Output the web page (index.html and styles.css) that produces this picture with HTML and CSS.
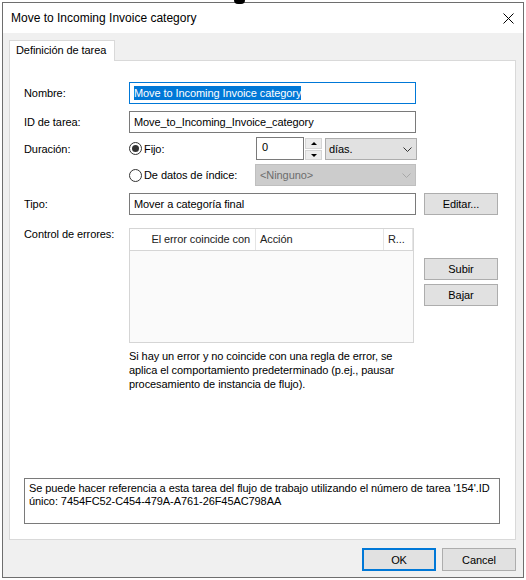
FILE: index.html
```html
<!DOCTYPE html>
<html lang="es">
<head>
    <meta charset="UTF-8">
    <title>Move to Incoming Invoice category</title>
    <link rel="stylesheet" href="styles.css">
</head>
<body>

    <!-- pointer blob peeking over the top edge -->
    <div class="cursor"></div>

    <div class="window">
        <div class="titlebar">
            <span class="title">Move to Incoming Invoice category</span>
            <svg class="close" width="11" height="11" viewBox="0 0 11 11">
                <path d="M0.5 0.5L10.5 10.5M10.5 0.5L0.5 10.5" stroke="#000" stroke-width="1" fill="none"/>
            </svg>
        </div>

        <div class="dialog-body">
            <div class="tab">Definición de tarea</div>

            <div class="panel">
                <div class="row row-name">
                    <span class="lbl">Nombre:</span>
                    <div class="textbox focused"><span class="selected">Move to Incoming Invoice category</span></div>
                </div>

                <div class="row row-id">
                    <span class="lbl">ID de tarea:</span>
                    <div class="textbox">Move_to_Incoming_Invoice_category</div>
                </div>

                <div class="row row-duration">
                    <span class="lbl">Duración:</span>
                    <div class="radio"><span class="dot checked"></span>Fijo:</div>
                    <div class="spin">
                        <div class="spin-input">0</div>
                        <div class="spin-btns">
                            <div class="spin-btn"><span class="tri-up"></span></div>
                            <div class="spin-btn"><span class="tri-down"></span></div>
                        </div>
                    </div>
                    <div class="combo combo-days">
                        <span>días.</span>
                        <svg width="9" height="5" viewBox="0 0 9 5"><polyline points="0.5,0.5 4.5,4.5 8.5,0.5" fill="none" stroke="#333" stroke-width="1"/></svg>
                    </div>
                </div>

                <div class="row row-index">
                    <span class="lbl"></span>
                    <div class="radio radio-index"><span class="dot"></span>De datos de índice:</div>
                    <div class="combo combo-disabled">
                        <span>&lt;Ninguno&gt;</span>
                        <svg width="9" height="5" viewBox="0 0 9 5"><polyline points="0.5,0.5 4.5,4.5 8.5,0.5" fill="none" stroke="#a8a8a8" stroke-width="1"/></svg>
                    </div>
                </div>

                <div class="row row-type">
                    <span class="lbl">Tipo:</span>
                    <div class="textbox">Mover a categoría final</div>
                    <button class="btn btn-side">Editar...</button>
                </div>

                <div class="row row-errors">
                    <span class="lbl">Control de errores:</span>
                    <div class="list">
                        <div class="list-head">
                            <div class="col col-match">El error coincide con</div>
                            <div class="col col-action">Acción</div>
                            <div class="col col-r">R...</div>
                        </div>
                        <div class="list-body"></div>
                    </div>
                    <div class="side-btns">
                        <button class="btn btn-side">Subir</button>
                        <button class="btn btn-side">Bajar</button>
                    </div>
                </div>

                <p class="note">Si hay un error y no coincide con una regla de error, se<br>aplica el comportamiento predeterminado (p.ej., pausar<br>procesamiento de instancia de flujo).</p>

                <div class="info">Se puede hacer referencia a esta tarea del flujo de trabajo utilizando el número de tarea '154'.ID<br>único: 7454FC52-C454-479A-A761-26F45AC798AA</div>
            </div>

            <div class="footer">
                <button class="btn btn-ok">OK</button>
                <button class="btn btn-cancel">Cancel</button>
            </div>
        </div>
    </div>

</body>
</html>
```

FILE: styles.css
```css
body {
    margin: 0;
    background: #fff;
    font-family: "Liberation Sans", Arial, sans-serif;
    font-size: 11px;
    letter-spacing: -0.08px;
    color: #000;
}

.cursor {
    position: absolute;
    left: 234px;
    top: 0;
    width: 11px;
    height: 4px;
    background: #000;
    border-radius: 0 0 5px 5px;
    z-index: 5;
}

.window {
    margin: 2px 0 0 2px;
    width: 522px;
    height: 576px;
    box-sizing: border-box;
    border: 1px solid #6e6e6e;
    background: #f0f0f0;
    display: flex;
    flex-direction: column;
}

.titlebar {
    height: 30px;
    flex-shrink: 0;
    background: #fff;
    display: flex;
    align-items: center;
    padding: 0 9px 0 8px;
}

.title {
    flex: 1;
    font-size: 12px;
    letter-spacing: 0;
}

.dialog-body {
    flex: 1;
    padding: 7px 7px 6px 6px;
    display: flex;
    flex-direction: column;
}

.tab {
    align-self: flex-start;
    width: 106px;
    height: 21px;
    box-sizing: border-box;
    border: 1px solid #d9d9d9;
    border-bottom: none;
    background: #fff;
    padding-left: 6px;
    line-height: 19px;
    margin-bottom: -1px;
    position: relative;
    z-index: 1;
}

.panel {
    height: 480px;
    box-sizing: border-box;
    border: 1px solid #d9d9d9;
    background: #fff;
    padding: 21px 0 15px 14px;
    display: flex;
    flex-direction: column;
}

.row {
    display: flex;
    align-items: center;
}

.lbl {
    width: 105px;
    flex-shrink: 0;
}

.row-id { margin-top: 7px; }
.row-duration { margin-top: 4px; height: 23px; align-items: flex-start; }
.row-duration .lbl { align-self: center; }
.row-index { margin-top: 4px; height: 22px; }
.row-type { margin-top: 7px; }
.row-errors { margin-top: 13px; align-items: flex-start; }

.textbox {
    width: 287px;
    height: 22px;
    box-sizing: border-box;
    border: 1px solid #7a7a7a;
    padding: 0 4px;
    line-height: 20px;
    white-space: nowrap;
    overflow: hidden;
}

.textbox.focused {
    border-color: #0078d7;
}

.selected {
    display: inline-block;
    vertical-align: top;
    margin-top: 3px;
    line-height: 14px;
    background: #0078d7;
    color: #fff;
}

.radio {
    width: 126px;
    display: flex;
    align-items: center;
    align-self: center;
}

.dot {
    width: 13px;
    height: 13px;
    box-sizing: border-box;
    border: 1px solid #333;
    border-radius: 50%;
    margin-right: 2px;
    position: relative;
    background: #fff;
}

.dot.checked::after {
    content: "";
    position: absolute;
    left: 2px;
    top: 2px;
    width: 7px;
    height: 7px;
    border-radius: 50%;
    background: #333;
}

.spin {
    display: flex;
    margin-left: 1px;
}

.spin-input {
    width: 48px;
    height: 23px;
    box-sizing: border-box;
    border: 1px solid #7a7a7a;
    padding-left: 5px;
    line-height: 19px;
}

.spin-btns {
    width: 17px;
    margin: 1px 0 0 1px;
    display: flex;
    flex-direction: column;
    gap: 1px;
}

.spin-btn {
    box-sizing: border-box;
    border: 1px solid #d4d4d4;
    background: #ececec;
    display: flex;
    align-items: center;
    justify-content: center;
}

.spin-btn:first-child { height: 11px; }
.spin-btn:last-child { height: 10px; }

.tri-up {
    border-left: 3px solid transparent;
    border-right: 3px solid transparent;
    border-bottom: 3px solid #000;
}

.tri-down {
    border-left: 3px solid transparent;
    border-right: 3px solid transparent;
    border-top: 3px solid #000;
}

.combo {
    height: 22px;
    box-sizing: border-box;
    border: 1px solid #adadad;
    background: #e1e1e1;
    display: flex;
    align-items: center;
    justify-content: space-between;
    padding: 0 4px 0 3px;
}

.combo-days {
    width: 92px;
    margin: 1px 0 0 3px;
}

.combo-disabled {
    width: 161px;
    background: #cccccc;
    border-color: #bfbfbf;
    color: #6d6d6d;
    padding-left: 4px;
}

.btn {
    font-family: "Liberation Sans", Arial, sans-serif;
    font-size: 11px;
    letter-spacing: -0.08px;
    color: #000;
    background: #e1e1e1;
    border: 1px solid #adadad;
    padding: 0;
    box-sizing: border-box;
}

.btn-side {
    width: 74px;
    height: 22px;
}

.row-type .btn-side { margin-left: 8px; }

.list {
    width: 285px;
    height: 115px;
    box-sizing: border-box;
    border: 1px solid #d5d5d5;
    background: #fafafa;
    display: flex;
    flex-direction: column;
}

.list-head {
    height: 22px;
    box-sizing: border-box;
    background: #fff;
    border-bottom: 1px solid #d5d5d5;
    display: flex;
    color: #222;
}

.col {
    line-height: 21px;
    border-right: 1px solid #e5e5e5;
    box-sizing: border-box;
    white-space: nowrap;
}

.col-match { width: 126px; text-align: right; padding-right: 5px; }
.col-action { width: 128px; padding-left: 4px; }
.col-r { width: 29px; padding-left: 4px; }

.side-btns {
    margin: 30px 0 0 10px;
    display: flex;
    flex-direction: column;
    gap: 4px;
}

.note {
    margin: 6px 0 0 105px;
    line-height: 14px;
    white-space: nowrap;
}

.info {
    margin-top: auto;
    width: 476px;
    height: 46px;
    box-sizing: border-box;
    border: 1px solid #7a7a7a;
    padding: 3px 4px 0;
    line-height: 13px;
    white-space: nowrap;
}

.footer {
    margin-top: 8px;
    display: flex;
    justify-content: flex-end;
    gap: 6px;
}

.btn-ok,
.btn-cancel {
    width: 74px;
    height: 23px;
}

.btn-ok {
    border: 2px solid #0078d7;
}
```
